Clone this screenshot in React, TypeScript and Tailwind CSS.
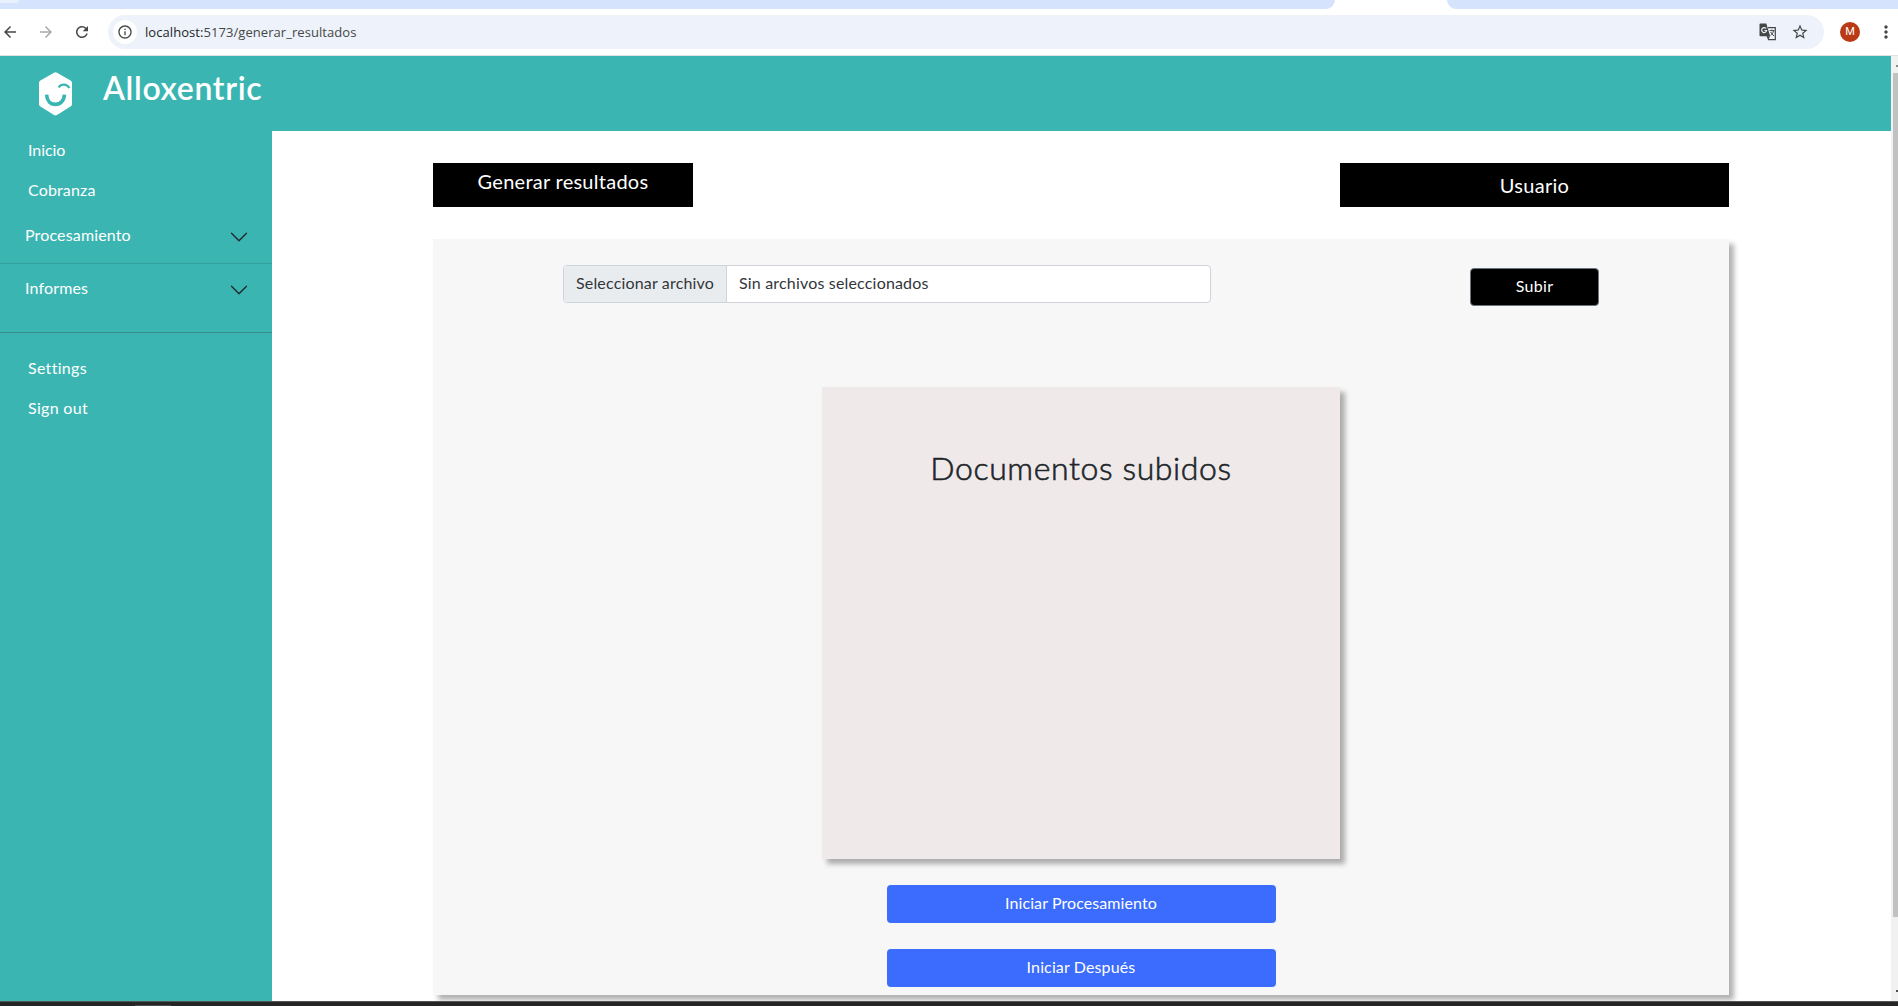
import {
  MdArrowBack,
  MdArrowForward,
  MdInfoOutline,
  MdMoreVert,
  MdRefresh,
  MdStarBorder,
} from 'react-icons/md';

function TranslateIcon() {
  return (
    <svg className="ml-auto size-[18px]" viewBox="0 0 18 18" fill="none">
      <path d="M9 4.600h7.300v12H9.600L8.200 13" stroke="#454746" strokeWidth="1.200" />
      <path d="M1.500.6h5.800L11.200 13.200H1.500A1 1 0 0 1 .5 12.200V1.600a1 1 0 0 1 1-1Z" fill="#454746" />
      <path d="M8.200 13.200h3l-1.800 3Z" fill="#454746" />
      <path d="M7.100 5.500A2.500 2.500 0 1 0 7.600 7.500H5.400" stroke="#edf2fb" strokeWidth="1.200" />
      <path d="M10.600 7.600h4.900M12.900 6.600v1M14.600 7.800c-.5 2-1.500 3.300-3 4.600M11.700 9c.7 1.500 1.800 2.800 3.300 4" stroke="#454746" strokeWidth="1" />
    </svg>
  );
}

function BrowserChrome() {
  return (
    <div className="h-14 shrink-0 bg-white">
      <div className="flex h-[9px] bg-white">
        <div className="w-[1335px] rounded-br-[9px] bg-[#d5e3fd]">
          <div className="h-[3px] w-[19px] rounded-br-[3px] bg-[#e9f0fd]" />
        </div>
        <div className="w-[112px]" />
        <div className="flex-1 rounded-bl-[9px] bg-[#d5e3fd]" />
      </div>
      <div className="flex h-[47px] items-center border-b border-[#dfe1e5] pl-px text-[#454746]">
        <MdArrowBack className="size-[18px] shrink-0" />
        <MdArrowForward className="ml-[18px] size-[18px] shrink-0 text-[#a9aaaa]" />
        <MdRefresh className="ml-[18px] size-[18px] shrink-0" />
        <div className="ml-[17px] flex h-[34px] w-[1716px] shrink-0 items-center rounded-full bg-[#edf2fb] pl-[5px]">
          <div className="flex size-6 items-center justify-center rounded-full bg-white">
            <MdInfoOutline className="size-4" />
          </div>
          <div className="ml-2 font-['Open_Sans','Noto_Sans',sans-serif] text-[13px] leading-[18px] tracking-[0.06px]">
            <span className="text-[#1f1f1f]">localhost:</span>5173/generar_resultados
          </div>
          <TranslateIcon />
          <MdStarBorder className="mr-[15px] ml-[14px] size-[18px]" />
        </div>
        <div className="ml-4 flex size-5 shrink-0 items-center justify-center rounded-full bg-[#b93a14] font-['Roboto',sans-serif] text-[11px] text-white">
          M
        </div>
        <MdMoreVert className="ml-4 size-5 shrink-0" />
      </div>
    </div>
  );
}

function Logo() {
  return (
    <svg className="mt-[15.5px] ml-[38px] h-11 w-[35px]" viewBox="0 0 35 44" fill="none">
      <path
        d="M16 .8a3 3 0 0 1 3 0L32.6 8.6A3 3 0 0 1 34 11.2V32a3 3 0 0 1-1.400 2.600L19 43a3 3 0 0 1-3 0L2.400 34.600A3 3 0 0 1 1 32V11.200a3 3 0 0 1 1.400-2.600Z"
        fill="#fff"
      />
      <path d="M8.600 22.600c.2 6 3.800 9.800 8.800 9.800s8.800-3.800 9-9.800" stroke="#3bb5b2" strokeWidth="3.600" />
      <path d="M20.600 15.400c3-4.200 8.200-3.600 10.800.6" stroke="#3bb5b2" strokeWidth="2.200" />
    </svg>
  );
}

function Chevron() {
  return (
    <svg className="mt-1 size-5" viewBox="0 0 16 16" fill="#212529">
      <path
        fillRule="evenodd"
        d="M1.646 4.646a.5.5 0 0 1 .708 0L8 10.293l5.646-5.647a.5.5 0 0 1 .708.708l-6 6a.5.5 0 0 1-.708 0l-6-6a.5.5 0 0 1 0-.708z"
      />
    </svg>
  );
}

function Sidebar() {
  return (
    <nav className="w-[272px] shrink-0 bg-[#3bb5b2] pt-[7px] tracking-[0.15px] text-white">
      <div className="pl-7 tracking-[-0.05px]">Inicio</div>
      <div className="mt-4 pl-7">Cobranza</div>
      <div className="flex justify-between border-b border-[#34a09d] pt-[21px] pr-[23px] pb-4 pl-[25px]">
        Procesamiento
        <Chevron />
      </div>
      <div className="flex justify-between border-b border-[#348f8d] pt-3 pr-[23px] pb-8 pl-[25px]">
        Informes
        <Chevron />
      </div>
      <div className="mt-[23px] pl-7 tracking-[0.3px]">Settings</div>
      <div className="mt-4 pl-7 tracking-[0.3px]">Sign out</div>
    </nav>
  );
}

function Content() {
  return (
    <main className="min-w-0 flex-1 bg-white pt-8 pl-[161px]">
      <div className="flex w-[1296px] justify-between text-xl leading-6 text-white">
        <div className="h-11 w-[260px] bg-black pt-[6px] text-center tracking-[0.26px]">Generar resultados</div>
        <div className="h-11 w-[389px] bg-black pt-[10px] text-center tracking-[0.3px]">Usuario</div>
      </div>
      <section className="mt-8 h-[756px] w-[1296px] bg-[#f7f7f7] pt-[26px] shadow-[5px_5px_5px_rgba(0,0,0,0.3)]">
        <div className="flex items-start pl-[130px]">
          <div className="flex h-[38px] w-[648px] overflow-hidden rounded border border-[#ced4da] bg-white text-[#32363a]">
            <div className="w-[163px] border-r border-[#ced4da] bg-[#e9ecef] pt-[5px] pl-3 tracking-[0.17px]">
              Seleccionar archivo
            </div>
            <div className="pt-[5px] pl-3 tracking-[0.18px]">Sin archivos seleccionados</div>
          </div>
          <button className="mt-[3px] ml-[259px] h-[38px] w-[129px] rounded border border-[#6c757d] bg-black pb-[2px] tracking-[0.3px] text-white">
            Subir
          </button>
        </div>
        <div className="mx-auto mt-[81px] h-[472px] w-[518px] bg-[#efe9e9] pt-[62px] text-center text-[32px] leading-[38px] font-light tracking-[0.6px] text-[#212529] shadow-[5px_5px_5px_rgba(0,0,0,0.3)] [-webkit-text-stroke:0.6px_#212529]">
          Documentos subidos
        </div>
        <div className="mx-auto mt-[26px] flex w-[389px] flex-col gap-[26px] text-white">
          <button className="h-[38px] rounded bg-[#3b6cfd] pb-[3px] tracking-[0.09px]">Iniciar Procesamiento</button>
          <button className="h-[38px] rounded bg-[#3b6cfd] pb-[3px] tracking-[0.13px]">Iniciar Después</button>
        </div>
      </section>
    </main>
  );
}

function Scrollbar() {
  return (
    <div className="flex w-[7px] shrink-0 flex-col items-end overflow-hidden bg-[#f1f1f1]">
      <div className="mt-[9px] h-[2px] w-[2px] bg-[#8a8a8a]" />
      <div className="mt-[6px] h-[844px] w-[5px] bg-[#c1c1c1]" />
      <div className="mt-[73px] h-[2px] w-[2px] bg-[#505050]" />
    </div>
  );
}

export default function App() {
  return (
    <div className="flex h-[1006px] w-[1898px] flex-col overflow-hidden bg-white font-['Lato','Open_Sans',sans-serif] text-base">
      <BrowserChrome />
      <div className="flex h-[945px] shrink-0 overflow-hidden">
        <div className="flex w-[1891px] flex-col overflow-hidden">
          <header className="flex h-[75px] shrink-0 bg-[#3bb5b2]">
            <Logo />
            <div className="mt-[13px] ml-[30px] text-[32px] leading-[38px] font-semibold tracking-[0.65px] text-white">
              Alloxentric
            </div>
          </header>
          <div className="flex flex-1">
            <Sidebar />
            <Content />
          </div>
        </div>
        <Scrollbar />
      </div>
      <div className="h-[5px] border-t border-[#555] bg-[#262525] pt-[3px] pl-[135px]">
        <div className="h-px w-9 bg-[#4a4a4a]" />
      </div>
    </div>
  );
}
